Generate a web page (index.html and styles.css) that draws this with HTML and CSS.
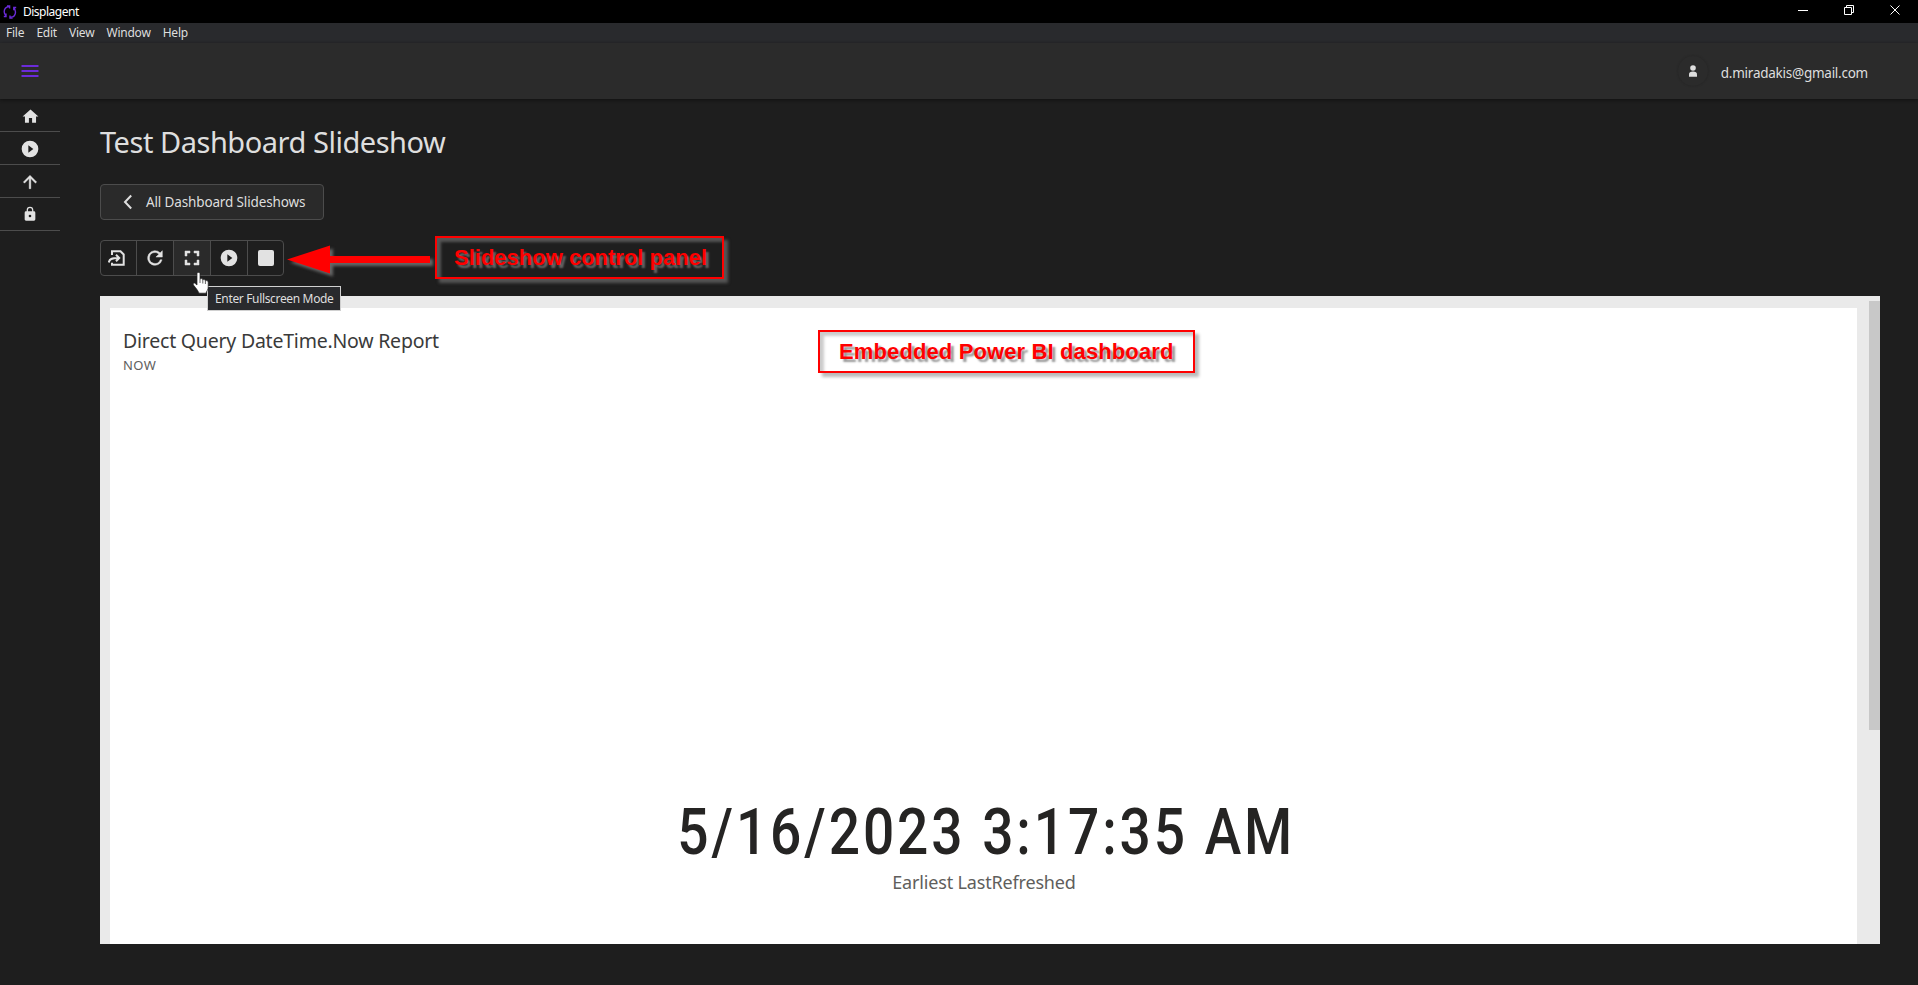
FILE: index.html
```html
<!DOCTYPE html>
<html lang="en">
<head>
<meta charset="utf-8">
<title>Displagent</title>
<link rel="stylesheet" href="styles.css">
</head>
<body>
<div class="titlebar">
  <svg class="app-logo" viewBox="0 0 14 14" width="14" height="14"><path d="M5.8 1.5C3 2 1.2 4.200 1.200 6.800c0 1.800.8 3.200 2.100 4.300M7.800 12.300c2.800-.4 4.700-2.600 4.700-5.400 0-1.800-.8-3.200-2.100-4.300M3 8.500v3H.8M10.800 5.200V2.500h2.400M4 1h2.600v2.500M9.600 13H7v-2.500"/></svg>
  <span class="app-name">Displagent</span>
  <div class="window-controls">
    <svg viewBox="0 0 12 12" width="12" height="12"><path d="M1 6.500h10"/></svg>
    <svg viewBox="0 0 12 12" width="12" height="12"><path d="M1.500 3.500h7v7h-7zM3.500 3V1.500h7v7H9"/></svg>
    <svg viewBox="0 0 12 12" width="12" height="12"><path d="M1.500 1.500l9 9M10.500 1.500l-9 9"/></svg>
  </div>
</div>
<nav class="menubar"><span>File</span><span>Edit</span><span>View</span><span>Window</span><span>Help</span></nav>
<header class="topbar">
  <svg class="burger" viewBox="0 0 18 12" width="18" height="12"><path d="M.5 1h17M.5 6h17M.5 11h17"/></svg>
  <div class="account">
    <span class="avatar"><svg viewBox="0 0 10 12" width="10" height="12"><circle cx="5" cy="3" r="2.800"/><path d="M1 11.800V9.500C1 7.500 2.500 6.600 5 6.600s4 .9 4 2.900v2.300z"/></svg></span>
    <span class="email">d.miradakis@gmail.com</span>
  </div>
</header>
<div class="body">
  <aside class="sidebar">
    <a><svg viewBox="0 0 24 24" width="19" height="19"><path d="M10 20v-6h4v6h5v-8h3L12 3 2 12h3v8z"/></svg></a>
    <a><svg viewBox="0 0 24 24" width="20" height="20"><path d="M12 2a10 10 0 1 0 0 20 10 10 0 0 0 0-20zM10 16.500v-9l6 4.500z"/></svg></a>
    <a><svg class="bold" viewBox="0 0 24 24" width="20" height="20"><path d="M4 12l1.410 1.410L11 7.830V20h2V7.830l5.580 5.590L20 12l-8-8z"/></svg></a>
    <a><svg class="lock" viewBox="0 0 24 24" width="16" height="16"><path d="M18 8h-1V6A5 5 0 0 0 7 6v2H6a2 2 0 0 0-2 2v10c0 1.100.9 2 2 2h12a2 2 0 0 0 2-2V10a2 2 0 0 0-2-2zm-6 9a2 2 0 1 1 0-4 2 2 0 0 1 0 4zm3.100-9H8.900V6a3.100 3.100 0 0 1 6.200 0z"/></svg></a>
  </aside>
  <main class="content">
    <h1 class="page-title">Test Dashboard Slideshow</h1>
    <button class="back"><svg viewBox="0 0 10 16" width="10" height="16"><path d="M8.200 1.500L2 8l6.200 6.500"/></svg><span>All Dashboard Slideshows</span></button>
    <div class="tool-row">
      <div class="toolbar">
        <button><svg class="exit" viewBox="0 0 18 18" width="18" height="18"><path class="line" d="M4 6V2.300h8.500l3.200 3.200v10.200H4v-2M.8 13.500c.6-3.300 2.600-4.500 10-4.500M8 5.800L11.200 9 8 12.200"/></svg></button>
        <button><svg class="bold" viewBox="0 0 24 24" width="22" height="22"><path d="M17.650 6.350A8 8 0 1 0 19.730 14h-2.080A6 6 0 1 1 12 6c1.660 0 3.140.69 4.220 1.780L13 11h7V4z"/></svg></button>
        <button class="hover"><svg class="bold" viewBox="0 0 24 24" width="24" height="24"><path d="M7 14H5v5h5v-2H7zM5 10h2V7h3V5H5zM17 17h-3v2h5v-5h-2zM14 5v2h3v3h2V5z"/></svg></button>
        <button><svg viewBox="0 0 24 24" width="20" height="20"><path d="M12 2a10 10 0 1 0 0 20 10 10 0 0 0 0-20zM10 16.500v-9l6 4.500z"/></svg></button>
        <button><svg viewBox="0 0 16 16" width="16" height="16"><rect width="16" height="16" rx="2"/></svg></button>
      </div>
    </div>
    <section class="report">
      <div class="tile">
        <h2 class="tile-title">Direct Query DateTime.Now Report</h2>
        <p class="tile-sub">NOW</p>
        <div class="value"><span>5/16/2023 3:17:35 AM</span></div>
        <div class="caption">Earliest LastRefreshed</div>
      </div>
      <div class="track"><div class="thumb"></div></div>
    </section>
  </main>
</div>
<div class="tooltip">Enter Fullscreen Mode</div>
<svg class="cursor" viewBox="0 0 18 24" width="18" height="24"><path d="M5 2.500C5 1 8 1 8 2.500V8c1-.8 2.600-.4 2.800.8 1-.6 2.400-.2 2.600 1 1.200-.5 2.800 0 2.800 1.800v4.500c0 2.500-1.500 3.900-2.200 6.100H7c-.8-2.400-2.700-4.500-5.300-7.900C.5 12.700 1.800 11.500 3 12.300l2 1.700z"/><path d="M8 8v4M10.800 9v3.500M13.400 10v3"/></svg>
<svg class="arrow" viewBox="0 0 150 36" width="150" height="36"><path d="M-1 14.500L42 .5v10.500h100v7H42v10.500z"/></svg>
<div class="note note-control">Slideshow control panel</div>
<div class="note note-embed">Embedded Power BI dashboard</div>
</body>
</html>
```
FILE: styles.css
```css
* { box-sizing: border-box; }
body { margin: 0; height: 985px; overflow: hidden; background: #1e1e1e; color: #dedede; font-family: "Noto Sans", "Open Sans", sans-serif; display: flex; flex-direction: column; }
button { font: inherit; color: inherit; }
.titlebar { height: 23px; flex: none; background: #000; color: #fff; display: flex; align-items: center; padding: 0 17px 0 3px; font-size: 12px; }
.app-logo { fill: none; stroke: #6b2bd9; stroke-width: 1.4; }
.app-name { margin-left: 6px; letter-spacing: -.5px; }
.window-controls { margin-left: auto; display: flex; gap: 34px; height: 15px; }
.window-controls svg { fill: none; stroke: #fff; stroke-width: 1; }
.menubar { height: 20px; flex: none; background: #292a2d; display: flex; align-items: center; padding-left: 6px; font-size: 12px; letter-spacing: -.23px; gap: 12.1px; line-height: 20px; }
.topbar { height: 56px; flex: none; background: #2b2b2b; display: flex; align-items: center; padding: 0 50px 0 21px; box-shadow: 0 1px 3px #111; }
.burger { stroke: #6b2bd9; stroke-width: 2; }
.account { margin-left: auto; display: flex; align-items: center; font-size: 13.5px; }
.email { letter-spacing: -.25px; padding-top: 3px; }
.avatar { width: 30px; height: 30px; border-radius: 50%; display: flex; align-items: center; justify-content: center; margin-right: 13px; box-shadow: 0 0 2px #222; }
.avatar svg { fill: #dedede; }
.body { flex: 1; display: flex; }
.sidebar { width: 60px; }
.sidebar a { height: 33px; padding-top: 2px; border-bottom: 1px solid #4c4c4c; display: flex; align-items: center; justify-content: center; }
.sidebar svg, .toolbar svg { fill: #e2e2e2; }
.sidebar .bold, .toolbar .bold { stroke: #e2e2e2; stroke-width: .5; }
.sidebar .lock { margin-bottom: 2px; }
.content { padding: 22px 38px 0 40px; flex: 1; display: flex; flex-direction: column; align-items: flex-start; }
.page-title { margin: 0; font-weight: 400; font-size: 29px; letter-spacing: -.47px; line-height: 42px; height: 63px; }
.back { height: 36px; width: 224px; background: #2a2a2a; border: 1px solid #4c4c4c; border-radius: 4px; display: flex; align-items: center; padding: 0 0 1px 22px; font-size: 13.500px; letter-spacing: -.14px; gap: 13px; }
.back svg { fill: none; stroke: #dedede; stroke-width: 2; }
.tool-row { padding: 20px 0; }
.toolbar { width: 184px; height: 36px; display: flex; border: 1px solid #4c4c4c; border-radius: 4px; }
.toolbar button { width: 37px; padding: 0; border: 0; border-right: 1px solid #4c4c4c; background: none; display: flex; align-items: center; justify-content: center; }
.toolbar button:first-child { width: 36px; padding-right: 3px; }
.toolbar button:last-child { width: 35px; border-right: 0; }
.toolbar .hover { background: #2a2a2a; }
.toolbar .line { fill: none; stroke: #e2e2e2; stroke-width: 2; }
.report { width: 1780px; height: 648px; background: #eaeaea; display: flex; padding: 12px 0 0 10px; }
.tile { width: 1747px; background: #fff; color: #252423; padding: 18px 12px 0 13px; }
.tile-title { margin: 0; font-weight: 400; font-size: 19.5px; letter-spacing: -.22px; line-height: 30px; color: #3a3a3a; }
.tile-sub { margin: 0; font-size: 13px; letter-spacing: .4px; line-height: 18px; color: #605e5c; }
.value { font-family: Roboto, sans-serif; font-weight: 500; font-size: 64px; line-height: 76px; margin-top: 421px; padding-left: 5px; text-align: center; letter-spacing: 3.4px; }
.value span { display: inline-block; transform: scaleX(.86); }
.caption { text-align: center; font-size: 18px; letter-spacing: -.17px; color: #605e5c; line-height: 28px; margin-top: -3px; }
.track { margin: -7px 0 0 auto; width: 11px; }
.thumb { height: 429px; background: #c8c8c8; }
.tooltip { position: absolute; left: 207px; top: 286px; width: 134px; height: 25px; border: 1px solid #d0d0d0; background: #292a2d; font-size: 12px; letter-spacing: -.34px; line-height: 23px; padding-left: 7px; white-space: nowrap; }
.cursor { position: absolute; left: 192px; top: 271px; fill: #fff; stroke: #222; stroke-width: .7; z-index: 1; }
.arrow { position: absolute; left: 288px; top: 245px; fill: #f00; overflow: visible; filter: drop-shadow(3px 3px 1.5px #666); }
.note { position: absolute; border: 2px solid #f00; color: #f00; font: bold 22px/39px "Liberation Sans", Arial, sans-serif; height: 43px; padding-left: 18px; white-space: nowrap; }
.note-control { left: 435px; top: 236px; width: 289px; padding-left: 17px; box-shadow: 4px 4px 3px #555, inset 4px 4px 3px #555; text-shadow: 3px 3px 2px #666; }
.note-embed { left: 818px; top: 330px; width: 377px; padding-left: 19px; letter-spacing: .12px; box-shadow: 4px 4px 3px #bbb, inset 4px 4px 3px #ccc; text-shadow: 3px 3px 2px #999; }
```
